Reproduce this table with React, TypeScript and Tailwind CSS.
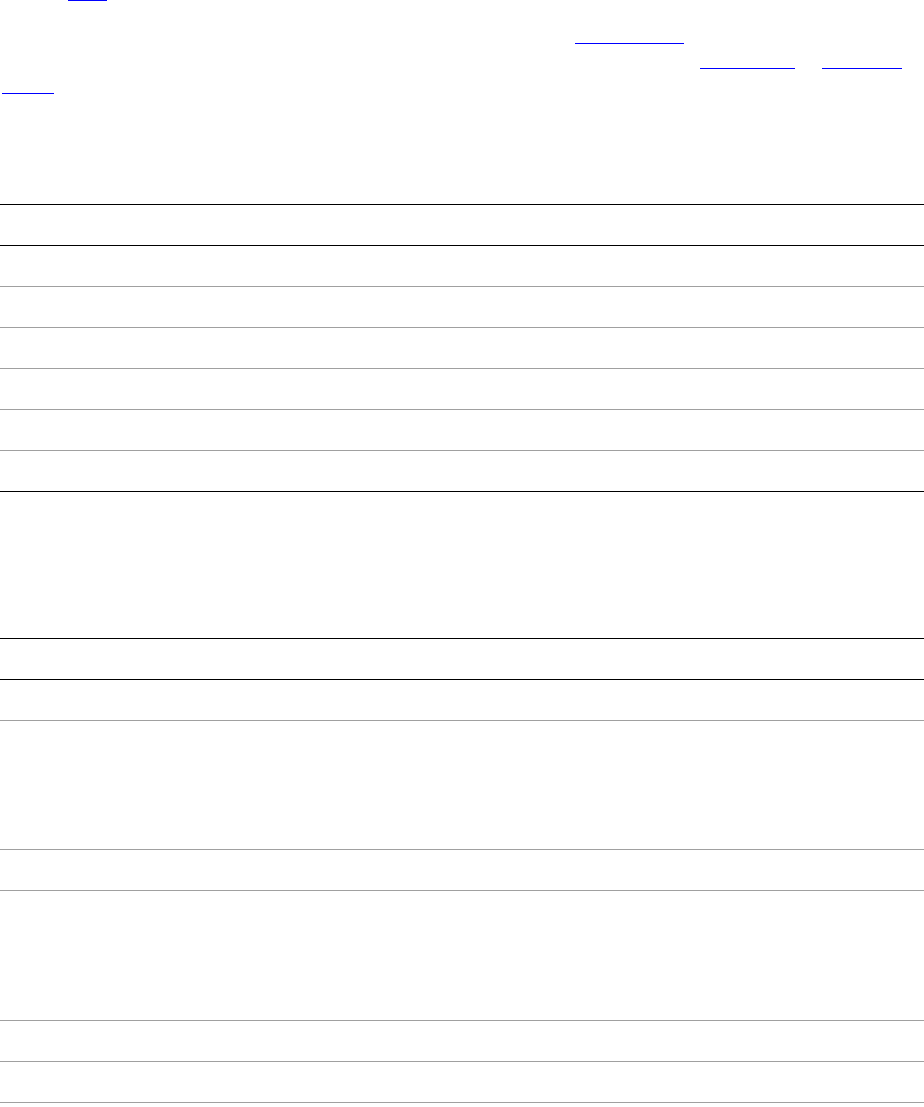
import React from 'react';

const Link: React.FC<{ width: string }> = ({ width }) => (
  <span className={`block h-px bg-[#0000ff] ${width}`} />
);

const Row: React.FC<{ h: string; last?: boolean }> = ({ h, last }) => (
  <div className={`${h} border-b ${last ? 'border-black' : 'border-[#a0a0a0]'}`} />
);

const App: React.FC = () => {
  return (
    <div className="w-[924px] h-[1107px] overflow-hidden bg-white font-['Liberation_Sans',Arial,sans-serif]">
      {/* intro paragraphs, only the link underlines show */}
      <div className="flex pl-[68px]">
        <Link width="w-[39px]" />
      </div>
      <div className="flex pl-[575px] mt-[42px]">
        <Link width="w-[109px]" />
      </div>
      <div className="flex pl-[700px] mt-[24px] gap-[27px]">
        <Link width="w-[95px]" />
        <Link width="w-[80px]" />
      </div>
      <div className="flex pl-[2px] mt-[24px]">
        <Link width="w-[52px]" />
      </div>

      {/* first table */}
      <div className="mt-[110px] border-t border-black">
        <div className="h-[41px] border-b border-black" />
        <Row h="h-[41px]" />
        <Row h="h-[41px]" />
        <Row h="h-[41px]" />
        <Row h="h-[41px]" />
        <Row h="h-[41px]" />
        <Row h="h-[41px]" last />
      </div>

      {/* second table */}
      <div className="mt-[146px] border-t border-black">
        <div className="h-[41px] border-b border-black" />
        <Row h="h-[41px]" />
        <Row h="h-[129px]" />
        <Row h="h-[41px]" />
        <Row h="h-[130px]" />
        <Row h="h-[41px]" />
        <Row h="h-[41px]" />
      </div>
    </div>
  );
};

export default App;
